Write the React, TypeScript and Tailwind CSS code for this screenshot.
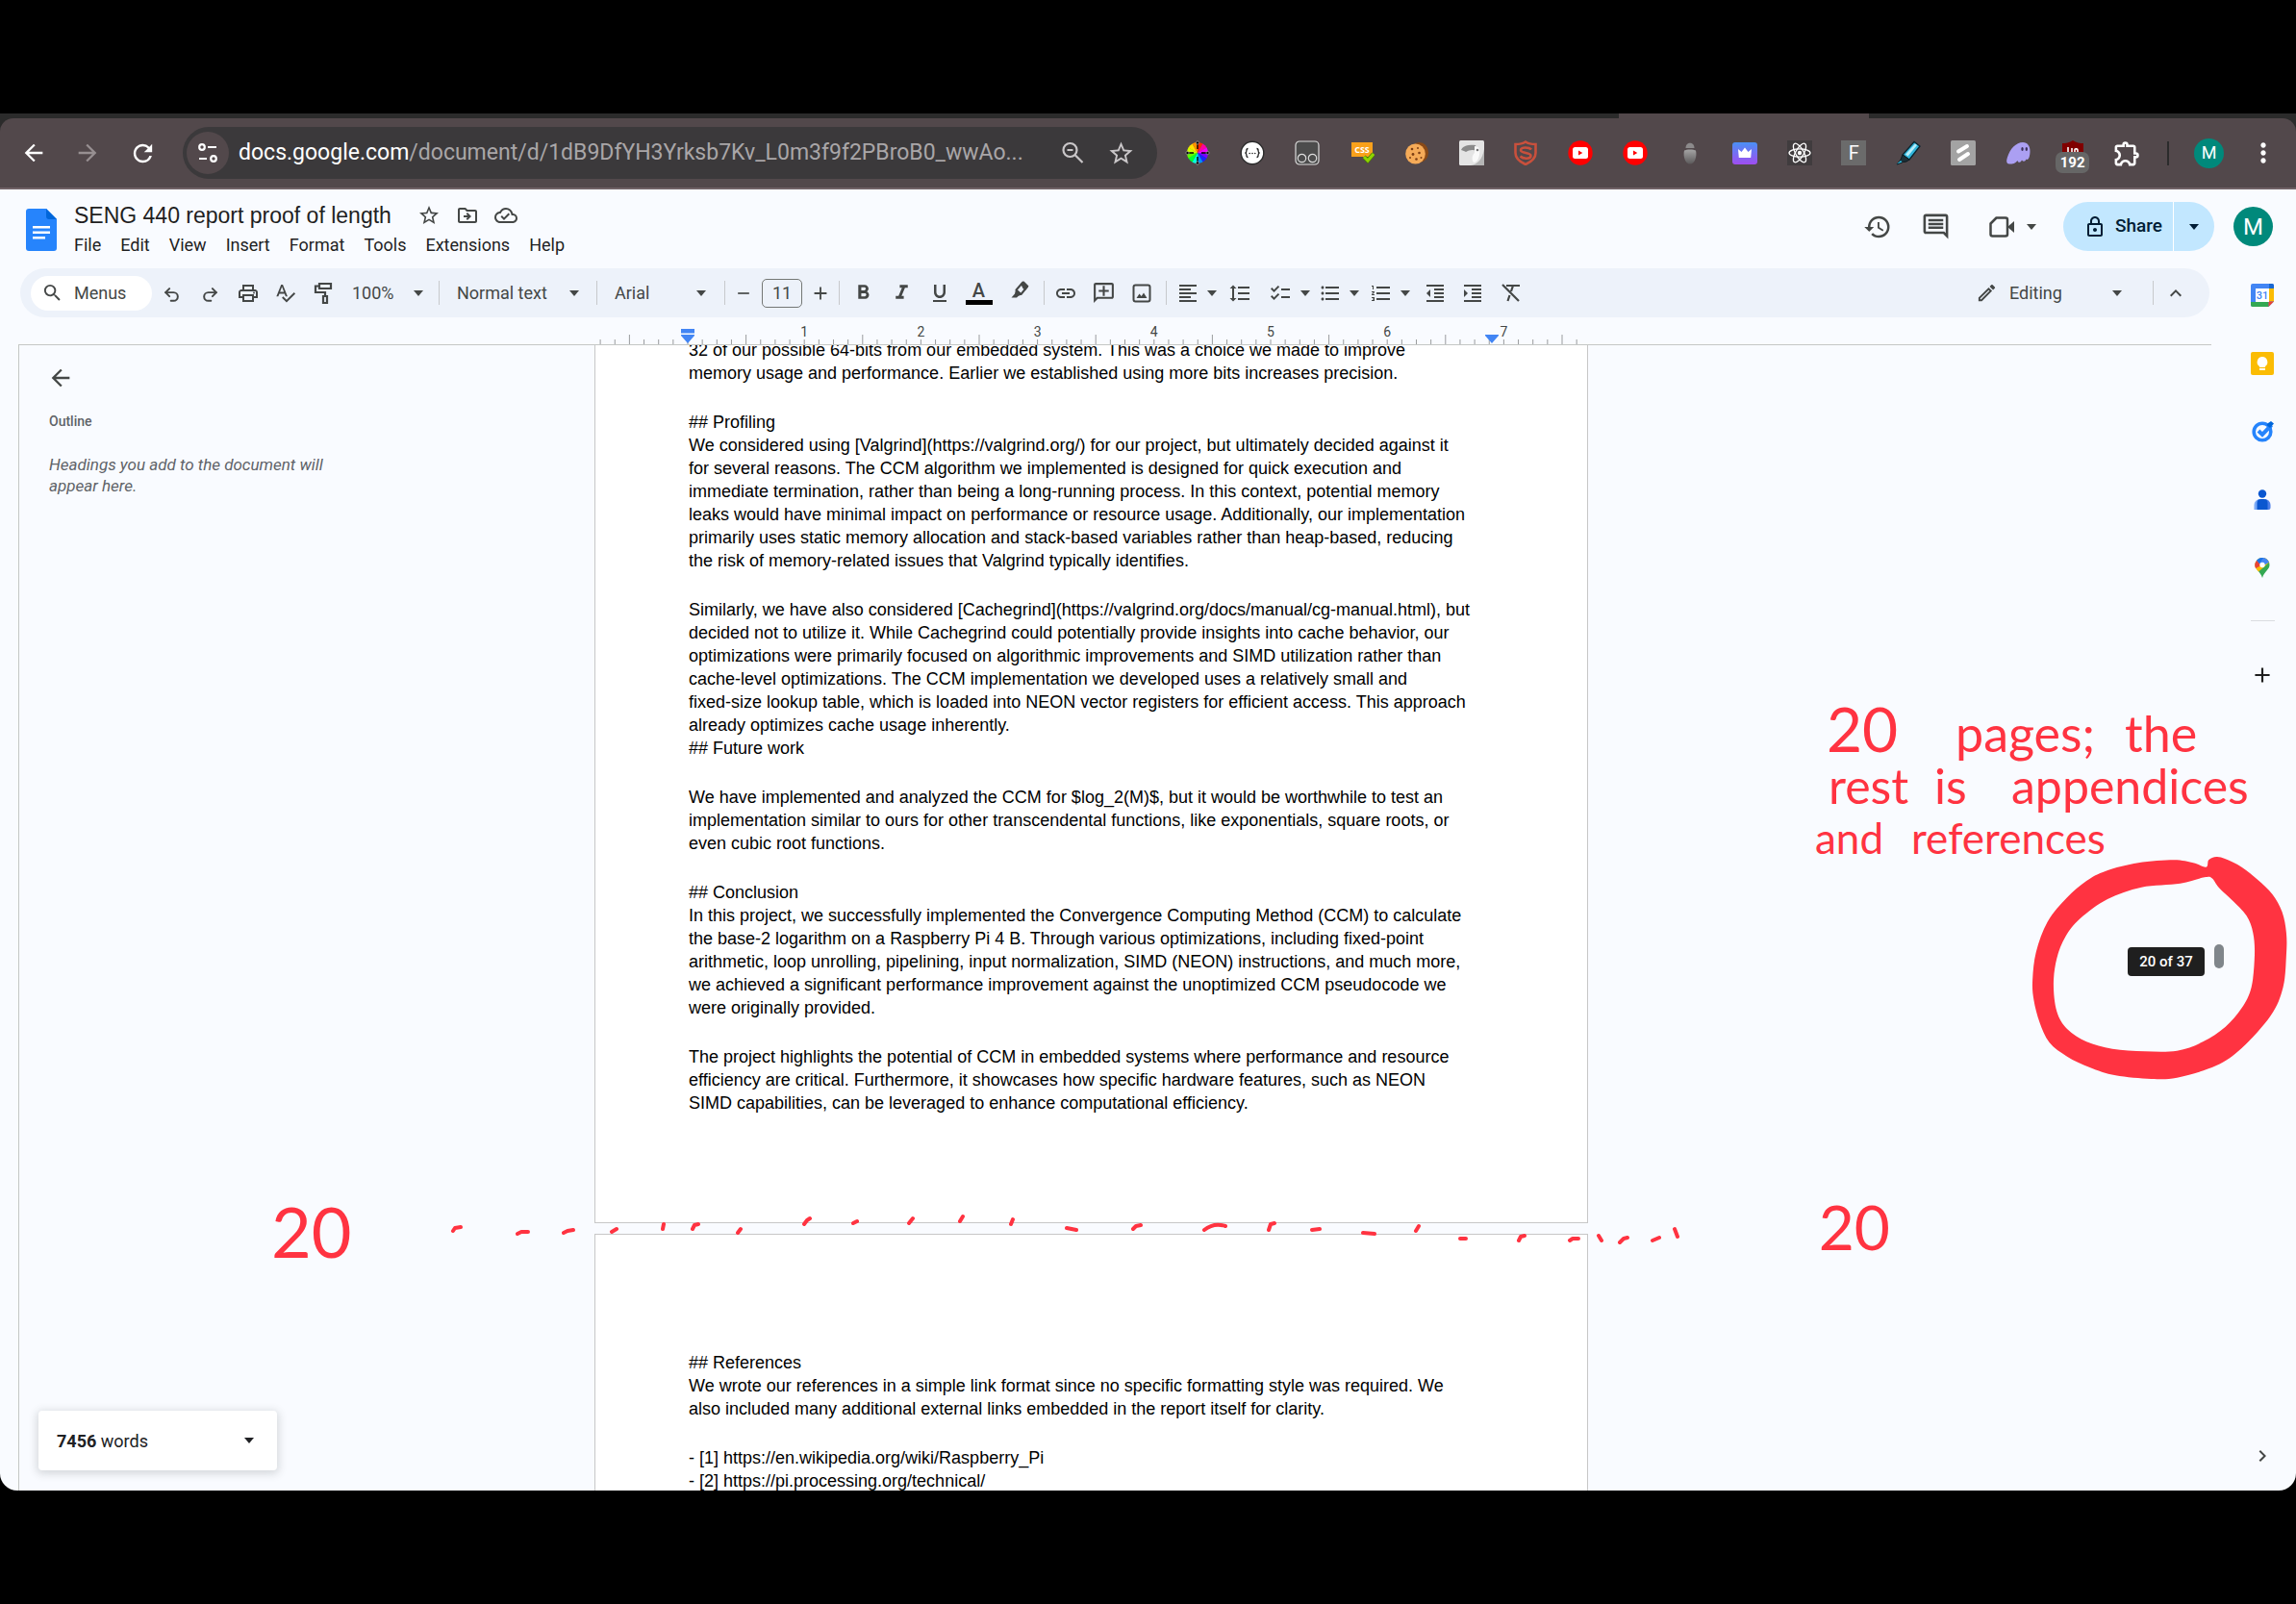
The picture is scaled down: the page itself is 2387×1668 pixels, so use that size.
import React from 'react';
import { Undo2, Redo2 } from 'lucide-react';
import {
  MdAdd,
  MdArrowBack,
  MdArrowForward,
  MdChecklist,
  MdChevronRight,
  MdFormatAlignLeft,
  MdFormatBold,
  MdFormatIndentDecrease,
  MdFormatIndentIncrease,
  MdFormatItalic,
  MdFormatLineSpacing,
  MdFormatListBulleted,
  MdFormatListNumbered,
  MdFormatUnderlined,
  MdHistory,
  MdKeyboardArrowUp,
  MdLink,
  MdMoreVert,
  MdOutlineAddComment,
  MdOutlineCloudDone,
  MdOutlineComment,
  MdOutlineDriveFileMove,
  MdOutlineEdit,
  MdOutlineExtension,
  MdOutlineLock,
  MdOutlinePrint,
  MdRefresh,
  MdRemove,
  MdSearch,
  MdSpellcheck,
  MdStarBorder,
} from 'react-icons/md';

type Point = [number, number];

const RED = '#ff3341';

function Caret() {
  return (
    <svg width="10" height="6" viewBox="0 0 10 6" className="shrink-0" aria-hidden="true">
      <path d="M0 0h10L5 6z" fill="currentColor" />
    </svg>
  );
}

/* ---------- browser extensions ---------- */

function Ext({ children }: { children: React.ReactNode }) {
  return (
    <svg width="26" height="26" viewBox="0 0 26 26" aria-hidden="true">
      {children}
    </svg>
  );
}

function YouTubeRound() {
  return (
    <Ext>
      <circle cx="13" cy="13" r="12.7" fill="#ff0000" />
      <rect x="5" y="7" width="16" height="12" rx="2.5" fill="#fff" />
      <path d="M11 10.5v5l4.3-2.5z" fill="#ff0000" />
    </Ext>
  );
}

const wheel = ['#ff2a00', '#ff00a0', '#f000ff', '#7a00ff', '#1a20ff', '#0090ff', '#00ffe0', '#00ff30', '#60ff00', '#d0ff00', '#ffe000', '#ff9000'];

const extensions: { name: string; icon: React.ReactNode }[] = [
  {
    name: 'Color wheel',
    icon: (
      <Ext>
        {wheel.map((c, i) => {
          const a = ((i * 30 - 90) * Math.PI) / 180;
          const b = ((i * 30 - 59) * Math.PI) / 180;
          return (
            <path
              key={c}
              fill={c}
              d={`M13 13L${13 + 11 * Math.cos(a)} ${13 + 11 * Math.sin(a)}A11 11 0 0 1 ${13 + 11 * Math.cos(b)} ${13 + 11 * Math.sin(b)}z`}
            />
          );
        })}
        <path d="M13 1v8M13 17v8M1 13h8M17 13h8" stroke="#000" strokeWidth="1.4" />
        <g fill="#000" stroke="#bbb" strokeWidth=".6">
          <circle cx="13" cy="2.5" r="1.6" />
          <circle cx="13" cy="23.5" r="1.6" />
          <circle cx="2.5" cy="13" r="1.6" />
          <circle cx="23.5" cy="13" r="1.6" />
        </g>
      </Ext>
    ),
  },
  {
    name: 'JSON viewer',
    icon: (
      <Ext>
        <circle cx="13" cy="13" r="11.8" fill="#fff" stroke="#2b2b2b" strokeWidth="1.4" />
        <path
          d="M8.5 8.5c-1.6 0-1.6 1-1.6 2.2 0 1.3-.3 2.1-1.4 2.3 1.1.2 1.4 1 1.4 2.3 0 1.2 0 2.2 1.6 2.2M17.5 8.5c1.6 0 1.6 1 1.6 2.2 0 1.3.3 2.1 1.4 2.3-1.1.2-1.4 1-1.4 2.3 0 1.2 0 2.2-1.6 2.2"
          fill="none"
          stroke="#222"
          strokeWidth="1.3"
        />
        <g fill="#222">
          <circle cx="10.2" cy="13.5" r=".8" />
          <circle cx="13" cy="13.5" r=".8" />
          <circle cx="15.8" cy="13.5" r=".8" />
        </g>
      </Ext>
    ),
  },
  {
    name: 'Tampermonkey',
    icon: (
      <Ext>
        <rect x="1" y="1" width="24" height="24" rx="4" fill="#4c4c4c" stroke="#dcdcdc" strokeWidth="1.2" />
        <circle cx="7.5" cy="18.5" r="4.2" fill="none" stroke="#dcdcdc" strokeWidth="1.2" />
        <circle cx="18.5" cy="18.5" r="4.2" fill="none" stroke="#dcdcdc" strokeWidth="1.2" />
      </Ext>
    ),
  },
  {
    name: 'CSS check',
    icon: (
      <Ext>
        <path d="M2 2h22v15H2z" fill="#f9a11b" />
        <text x="13" y="13" textAnchor="middle" fontSize="9" fontWeight="700" fontFamily="Open Sans, sans-serif" fill="#fff">
          CSS
        </text>
        <path d="M15 17l4 4 6-7" fill="none" stroke="#4b7d00" strokeWidth="4.5" />
        <path d="M15 17l4 4 6-7" fill="none" stroke="#8fd400" strokeWidth="3" />
      </Ext>
    ),
  },
  {
    name: 'Cookie editor',
    icon: (
      <Ext>
        <ellipse cx="15.5" cy="12.5" rx="9.5" ry="10.5" fill="#8a4a16" />
        <ellipse cx="11.5" cy="14" rx="10.3" ry="10.5" fill="#f5ab58" />
        <g fill="#7d3f14">
          <circle cx="8" cy="9" r="1.3" />
          <circle cx="14" cy="8" r="1" />
          <circle cx="9" cy="14.5" r="1.4" />
          <circle cx="15.5" cy="13" r="1.3" />
          <circle cx="6" cy="18" r="1" />
          <circle cx="12.5" cy="19.5" r="1.3" />
          <circle cx="17.5" cy="18" r="1" />
        </g>
      </Ext>
    ),
  },
  {
    name: 'Toucan',
    icon: (
      <Ext>
        <rect width="26" height="26" rx="1.5" fill="#e4e4e4" />
        <path d="M26 9v17H12c7-1 12-6 14-17z" fill="#b5b5b5" />
        <path d="M2 10c2-5 9-6 15-5l2 6c-5-2-9-1-12 1-2-1-4-2-5-2z" fill="#8a8a8a" />
        <path d="M16 6c5 0 6 4 5 9-1 5-3 8-6 8-2-3-2-7 1-10z" fill="#fafafa" />
        <circle cx="19" cy="10" r="1.3" fill="#777" />
      </Ext>
    ),
  },
  {
    name: 'Shield S',
    icon: (
      <Ext>
        <g fill="none" stroke="#c9503c" strokeWidth="2.6">
          <path d="M13 1.5c3 2 7 2.5 10.5 2.5v9c0 6-5 9.5-10.5 12C7.5 22.5 2.5 19 2.5 13V4C6 4 10 3.5 13 1.5z" />
          <path d="M19 9.500c-2-2.500-11-3-11 .5 0 4 10.500 2 10.500 6 0 3.500-8 3.500-11 .5" />
        </g>
      </Ext>
    ),
  },
  { name: 'YouTube tweaks', icon: <YouTubeRound /> },
  { name: 'YouTube controls', icon: <YouTubeRound /> },
  {
    name: 'Acorn',
    icon: (
      <Ext>
        <defs>
          <linearGradient id="acorn" x1="0" y1="0" x2="0" y2="1">
            <stop offset="0" stopColor="#a5a5a5" />
            <stop offset="1" stopColor="#5c5a5b" />
          </linearGradient>
        </defs>
        <path d="M8.500 8c0-7 9-7 9 0z" fill="#8c8a8b" />
        <path d="M7 10.500c2-1.500 10-1.500 12 0 1.500 6-1 14-6 14S5.500 16.500 7 10.500z" fill="url(#acorn)" />
      </Ext>
    ),
  },
  {
    name: 'Crown',
    icon: (
      <Ext>
        <defs>
          <linearGradient id="crown" x1="0" y1="0" x2="0" y2="1">
            <stop offset="0" stopColor="#4a90f5" />
            <stop offset="1" stopColor="#a04df0" />
          </linearGradient>
        </defs>
        <rect y="2" width="26" height="23" rx="3" fill="url(#crown)" />
        <path d="M6 9l3.500 3L13 7.500l3.500 4.500L20 9l-.8 9H6.800z" fill="#fff" />
      </Ext>
    ),
  },
  {
    name: 'React tools',
    icon: (
      <Ext>
        <rect width="26" height="26" fill="#403c3e" />
        <g fill="none" stroke="#fff" strokeWidth="1.3">
          <ellipse cx="13" cy="13" rx="11" ry="4.2" />
          <ellipse cx="13" cy="13" rx="11" ry="4.2" transform="rotate(60 13 13)" />
          <ellipse cx="13" cy="13" rx="11" ry="4.2" transform="rotate(120 13 13)" />
        </g>
        <circle cx="13" cy="13" r="2.2" fill="#fff" />
      </Ext>
    ),
  },
  {
    name: 'F',
    icon: <span className="flex size-[26px] items-center justify-center bg-[#6b6b6b] font-[Roboto] text-[20px] leading-none text-white">F</span>,
  },
  {
    name: 'Highlighter',
    icon: (
      <Ext>
        <path d="M7 15L19 1.500l6 4.500-11 14z" fill="#2fb4da" stroke="#0b2530" strokeWidth="1.3" />
        <path d="M10 14.500L20 3.500l2 1.500-9.500 11.500z" fill="#b5ecf9" />
        <path d="M7 15l7 5-3 2-3.500.5L1 25l4-5z" fill="#1d3038" stroke="#0b1a20" />
        <path d="M1 24.500l4-3.500 1.500 1.500z" fill="#2fc4ea" />
      </Ext>
    ),
  },
  {
    name: 'Stripes',
    icon: (
      <Ext>
        <rect width="26" height="26" rx="1.5" fill="#a3a3a3" />
        <path d="M8 11.500l9-5.500M9 20l9-6" stroke="#fff" strokeWidth="4" strokeLinecap="round" />
      </Ext>
    ),
  },
  {
    name: 'Phantom',
    icon: (
      <Ext>
        <path
          d="M25.500 11c0 7-2 10-4 8.500-1 2.500-3 3-4.500 1-1.500 3-4 3-4.500.5-2 3-5 3.500-8.500 3.500-3 0-3.500-3-2-7C4.500 9 11 2 18 2c5 0 7.500 4 7.500 9z"
          fill="#ab9ff2"
        />
        <ellipse cx="17.5" cy="9" rx="1.2" ry="1.9" fill="#3c315b" />
        <ellipse cx="21.8" cy="9" rx="1.2" ry="1.9" fill="#3c315b" />
      </Ext>
    ),
  },
  {
    name: 'uBlock',
    icon: (
      <span className="relative flex size-[26px] justify-center">
        <Ext>
          <path d="M13 0c3.500 2.500 7.500 3 11 3v12H2V3c3.500 0 7.500-.5 11-3z" fill="#800000" />
          <path d="M8 7v5M12 13V8M15 13V9.500c0-1 3-1 3 .5v3" stroke="#fff" strokeWidth="1.6" fill="none" />
        </Ext>
        <span className="absolute top-3 flex h-[22px] w-[35px] items-center justify-center rounded-[7px] bg-[#666666] font-[Roboto] text-[15px] font-bold leading-none text-white">
          192
        </span>
      </span>
    ),
  },
  { name: 'Extensions', icon: <MdOutlineExtension className="size-[31px] text-white" /> },
];

function BrowserBar() {
  return (
    <div className="bg-[#2b2b2b]">
      <div className="flex h-[5px]">
        <div className="flex-1" />
        <div className="w-[260px] bg-[#52484b]" />
        <div className="w-[444px]" />
      </div>
      <div className="flex h-[74px] items-center rounded-t-[14px] border-b-2 border-[#706266] bg-[#52484b] pl-[7px]">
        <button aria-label="Back" className="flex w-14 justify-center text-white">
          <MdArrowBack className="size-7" />
        </button>
        <button aria-label="Forward" className="flex w-14 justify-center text-[#978f91]">
          <MdArrowForward className="size-7" />
        </button>
        <button aria-label="Reload" className="flex w-[58px] justify-center text-white">
          <MdRefresh className="size-[29px]" />
        </button>
        <div className="ml-[13px] flex h-[54px] min-w-0 flex-1 items-center rounded-full bg-[#3b393b] pl-1 pr-[13px] font-[Roboto]">
          <button aria-label="Site information" className="flex size-11 shrink-0 items-center justify-center rounded-full bg-[#52484b]">
            <svg width="22" height="22" viewBox="0 0 22 22" fill="none" stroke="#fff" strokeWidth="2.2" aria-hidden="true">
              <circle cx="5" cy="5" r="2.8" />
              <path d="M11 5h9M2 17h8" />
              <circle cx="17" cy="17" r="2.8" />
            </svg>
          </button>
          <div className="ml-[10px] min-w-0 flex-1 truncate text-[23px] leading-8 text-[#a9a6a8]">
            <span className="text-white">docs.google.com</span>/document/d/1dB9DfYH3Yrksb7Kv_L0m3f9f2PBroB0_wwAo...
          </div>
          <button aria-label="Zoom" className="flex w-[50px] justify-center">
            <svg width="24" height="24" viewBox="0 0 24 24" fill="none" stroke="#c9c6c8" strokeWidth="2.2" aria-hidden="true">
              <circle cx="9.5" cy="9" r="7" />
              <path d="M14.500 14l8 8M6.500 9h6" />
            </svg>
          </button>
          <button aria-label="Bookmark" className="flex w-[50px] justify-center text-[#c9c6c8]">
            <MdStarBorder className="size-[29px]" />
          </button>
        </div>
        <div className="ml-[14px] flex w-[1023px]">
          {extensions.map((e) => (
            <button key={e.name} aria-label={e.name} className="flex flex-1 items-center justify-center">
              {e.icon}
            </button>
          ))}
        </div>
        <div className="ml-[13px] h-[25px] w-[2px] bg-[#2b2b2b]" />
        <button aria-label="Profile" className="ml-[26px] flex size-[31px] items-center justify-center rounded-full bg-[#00897b] font-[Roboto] text-[18px] leading-none text-white">
          M
        </button>
        <button aria-label="Browser menu" className="ml-[25px] mr-[18px] flex w-8 justify-center text-white">
          <MdMoreVert className="size-8" />
        </button>
      </div>
    </div>
  );
}

/* ---------- document header ---------- */

const menus = ['File', 'Edit', 'View', 'Insert', 'Format', 'Tools', 'Extensions', 'Help'];

function DocHeader() {
  return (
    <header className="flex h-[82px] items-start pl-[27px] pr-6 pt-[13px]">
      <a href="#home" aria-label="Docs home" className="mt-[7px]">
        <svg width="32" height="44" viewBox="0 0 32 44" aria-hidden="true">
          <path d="M3 0h18l11 11v30a3 3 0 0 1-3 3H3a3 3 0 0 1-3-3V3a3 3 0 0 1 3-3z" fill="#2684fc" />
          <path d="M21 0l11 11H24a3 3 0 0 1-3-3z" fill="#0066da" />
          <path d="M7 18h18v2.600H7zM7 23.500h18v2.600H7zM7 29h13v2.600H7z" fill="#fff" />
        </svg>
      </a>
      <div className="ml-[18px]">
        <div className="flex h-7 items-center text-[#444746]">
          <input
            aria-label="Document title"
            defaultValue="SENG 440 report proof of length"
            className="w-[349px] bg-transparent font-[Liberation_Sans] text-[23px] leading-7 text-[#1f1f1f]"
          />
          <button aria-label="Star" className="flex w-10 justify-center">
            <MdStarBorder className="size-6" />
          </button>
          <button aria-label="Move" className="flex w-10 justify-center">
            <MdOutlineDriveFileMove className="size-6" />
          </button>
          <button aria-label="Saved to Drive" className="flex w-10 justify-center">
            <MdOutlineCloudDone className="size-6" />
          </button>
        </div>
        <nav className="mt-[3px] flex gap-5 font-[Roboto] text-[18px] leading-7 text-[#1f1f1f]">
          {menus.map((m) => (
            <button key={m}>{m}</button>
          ))}
        </nav>
      </div>
      <div className="ml-auto flex h-[51px] items-center text-[#444746]">
        <button aria-label="Version history" className="flex w-[61px] justify-center">
          <MdHistory className="size-[30px]" />
        </button>
        <button aria-label="Comments" className="flex w-[60px] justify-center">
          <MdOutlineComment className="size-[31px]" />
        </button>
        <button aria-label="Join a call" className="flex w-[103px] items-center gap-3 pl-[25px]">
          <svg width="28" height="26" viewBox="0 0 28 26" aria-hidden="true">
            <path d="M8.500 3.500h9.500a2 2 0 0 1 2 2v15a2 2 0 0 1-2 2H4.500a2 2 0 0 1-2-2V9.500z" fill="none" stroke="currentColor" strokeWidth="2.5" strokeLinejoin="round" />
            <path d="M20 13l7-6v12z" fill="currentColor" />
          </svg>
          <Caret />
        </button>
        <div className="flex h-full w-[157px] overflow-hidden rounded-full bg-[#c2e7ff] font-[Roboto] text-[19px] font-medium text-[#001d35]">
          <button className="flex flex-1 items-center gap-[9px] pl-[21px]">
            <MdOutlineLock className="size-6" />
            Share
          </button>
          <button aria-label="Share options" className="flex w-[43px] items-center border-l border-white pl-4">
            <Caret />
          </button>
        </div>
        <button aria-label="Account" className="ml-5 flex size-[41px] items-center justify-center rounded-full bg-[#00897b] font-[Roboto] text-[24px] leading-none text-white">
          M
        </button>
      </div>
    </header>
  );
}

/* ---------- formatting toolbar ---------- */

function Sep() {
  return <div className="h-[25px] w-px shrink-0 bg-[#c7c9cc]" />;
}

function Tool({ label, width = 'w-10', children }: { label: string; width?: string; children: React.ReactNode }) {
  return (
    <button aria-label={label} className={`flex h-9 shrink-0 items-center justify-center ${width}`}>
      {children}
    </button>
  );
}

function Toolbar() {
  return (
    <div className="ml-[21px] mr-5 flex h-[51px] shrink-0 items-center rounded-full bg-[#edf2fa] pl-[11px] font-[Roboto] text-[18px] text-[#444746]">
      <button className="flex h-9 w-[126px] items-center gap-[11px] rounded-full bg-white pl-[11px]">
        <MdSearch className="size-[23px]" />
        Menus
      </button>
      <Tool label="Undo"><Undo2 className="mt-1 size-[19px]" strokeWidth={2.5} /></Tool>
      <Tool label="Redo"><Redo2 className="mt-1 size-[19px]" strokeWidth={2.5} /></Tool>
      <Tool label="Print" width="w-[39px]"><MdOutlinePrint className="size-6" /></Tool>
      <Tool label="Spelling" width="w-[39px]"><MdSpellcheck className="size-[23px]" /></Tool>
      <Tool label="Paint format" width="w-[39px]">
        <svg width="20" height="24" viewBox="0 0 20 24" fill="none" stroke="currentColor" strokeWidth="2.2" aria-hidden="true">
          <path d="M6 2h12v5H6zM6 4.500H2v6.500h10v4" />
          <path d="M10 15h4v7h-4z" />
        </svg>
      </Tool>
      <button className="flex w-[101px] items-center justify-between pl-[11px] pr-4">100%<Caret /></button>
      <Sep />
      <button className="flex w-[163px] items-center justify-between pl-[18px] pr-[18px]">Normal text<Caret /></button>
      <Sep />
      <button className="flex w-[132px] items-center justify-between pl-[18px] pr-[19px]">Arial<Caret /></button>
      <Sep />
      <Tool label="Decrease font size" width="w-[38px]"><MdRemove className="size-5" /></Tool>
      <input aria-label="Font size" defaultValue="11" className="h-[30px] w-[42px] rounded-[5px] border border-[#747775] bg-transparent text-center text-[18px] leading-none" />
      <Tool label="Increase font size" width="w-[38px]"><MdAdd className="size-[22px]" /></Tool>
      <Sep />
      <Tool label="Bold" width="w-[48px]"><MdFormatBold className="size-[25px]" /></Tool>
      <Tool label="Italic" width="w-[33px]"><MdFormatItalic className="size-[25px]" /></Tool>
      <Tool label="Underline" width="w-[46px]"><MdFormatUnderlined className="size-6" /></Tool>
      <Tool label="Text color" width="w-[35px]">
        <span className="flex flex-col items-center">
          <span className="text-[20px] font-medium leading-5">A</span>
          <span className="h-[5px] w-[28px] bg-black" />
        </span>
      </Tool>
      <Tool label="Highlight color" width="w-[50px]">
        <svg width="20" height="20" viewBox="0 0 20 20" className="mb-[6px]" aria-hidden="true">
          <path d="M13.500 1.500l4.500 4.500-6.500 8-5-4.500z" fill="none" stroke="currentColor" strokeWidth="2" strokeLinejoin="round" />
          <path d="M11 3l3.500-2.500 5 5L16 10l-2.500-2zM6 9l6 5.500-3.500 1.500-1.500 1.500H1.500l3.500-4z" fill="currentColor" />
        </svg>
      </Tool>
      <Sep />
      <Tool label="Insert link" width="w-[43px]"><MdLink className="size-6" /></Tool>
      <Tool label="Add comment" width="w-9"><MdOutlineAddComment className="size-[25px] -scale-x-100" /></Tool>
      <Tool label="Insert image" width="w-[43px]">
        <svg width="20" height="20" viewBox="0 0 20 20" aria-hidden="true">
          <rect x="1.5" y="1.5" width="17" height="17" rx="2" fill="none" stroke="currentColor" strokeWidth="2" />
          <path d="M4.500 15l3-4.500 2.200 2.500 2.300-3.500 3.500 5.500z" fill="currentColor" />
        </svg>
      </Tool>
      <div className="w-1" />
      <Sep />
      <Tool label="Align" width="w-[62px]"><MdFormatAlignLeft className="mr-2 size-6 shrink-0" /><Caret /></Tool>
      <Tool label="Line spacing" width="w-[28px]"><MdFormatLineSpacing className="size-6" /></Tool>
      <Tool label="Checklist" width="w-[70px]"><MdChecklist className="ml-1 mr-[9px] size-6" /><Caret /></Tool>
      <Tool label="Bulleted list" width="w-[38px]"><MdFormatListBulleted className="mr-2 size-6 shrink-0" /><Caret /></Tool>
      <Tool label="Numbered list" width="w-[68px]"><MdFormatListNumbered className="mr-2 size-6 shrink-0" /><Caret /></Tool>
      <Tool label="Decrease indent" width="w-[26px]"><MdFormatIndentDecrease className="size-6" /></Tool>
      <Tool label="Increase indent" width="w-[52px]"><MdFormatIndentIncrease className="size-6" /></Tool>
      <Tool label="Clear formatting" width="w-[28px]">
        <svg width="22" height="22" viewBox="0 0 22 22" fill="none" stroke="currentColor" strokeWidth="2.2" aria-hidden="true">
          <path d="M6 3h14M13 3l-2 6M9.500 13L7.500 19M2 2l17 17" />
        </svg>
      </Tool>
      <button className="ml-auto flex w-[187px] items-center pl-[3px]">
        <MdOutlineEdit className="size-[23px]" />
        <span className="ml-3">Editing</span>
        <span className="ml-auto mr-8"><Caret /></span>
      </button>
      <Sep />
      <Tool label="Hide the menus" width="w-[46px]"><MdKeyboardArrowUp className="size-6" /></Tool>
      <div className="w-3" />
    </div>
  );
}

/* ---------- ruler ---------- */

function Ruler() {
  const ticks = Array.from({ length: 68 }, (_, i) => i - 6);
  const at = (i: number) => 97 + (i * 121.2) / 8;
  return (
    <svg width="1034" height="28" viewBox="0 0 1034 28" className="block" aria-hidden="true">
      {ticks.map((i) => (
        <path key={i} d={`M${at(i)} ${(i + 8) % 8 === 4 ? 18 : 23}V28`} stroke="#9a9c9e" strokeWidth="1" />
      ))}
      {[1, 2, 3, 4, 5, 6, 7].map((n) => (
        <text key={n} x={at(n * 8)} y="20" textAnchor="middle" fontFamily="Roboto, sans-serif" fontSize="14" fill="#444746">
          {n}
        </text>
      ))}
      <path d="M90 12h14v4.500H90zM90 18h14v1l-7 8-7-8z" fill="#4285f4" />
      <path d="M926 18h14v1l-7 8-7-8z" fill="#4285f4" />
    </svg>
  );
}

/* ---------- document ---------- */

const pageOne: string[][] = [
  [
    '32 of our possible 64-bits from our embedded system. This was a choice we made to improve',
    'memory usage and performance. Earlier we established using more bits increases precision.',
  ],
  [
    '## Profiling',
    'We considered using [Valgrind](https://valgrind.org/) for our project, but ultimately decided against it',
    'for several reasons. The CCM algorithm we implemented is designed for quick execution and',
    'immediate termination, rather than being a long-running process. In this context, potential memory',
    'leaks would have minimal impact on performance or resource usage. Additionally, our implementation',
    'primarily uses static memory allocation and stack-based variables rather than heap-based, reducing',
    'the risk of memory-related issues that Valgrind typically identifies.',
  ],
  [
    'Similarly, we have also considered [Cachegrind](https://valgrind.org/docs/manual/cg-manual.html), but',
    'decided not to utilize it. While Cachegrind could potentially provide insights into cache behavior, our',
    'optimizations were primarily focused on algorithmic improvements and SIMD utilization rather than',
    'cache-level optimizations. The CCM implementation we developed uses a relatively small and',
    'fixed-size lookup table, which is loaded into NEON vector registers for efficient access. This approach',
    'already optimizes cache usage inherently.',
    '## Future work',
  ],
  [
    'We have implemented and analyzed the CCM for $log_2(M)$, but it would be worthwhile to test an',
    'implementation similar to ours for other transcendental functions, like exponentials, square roots, or',
    'even cubic root functions.',
  ],
  [
    '## Conclusion',
    'In this project, we successfully implemented the Convergence Computing Method (CCM) to calculate',
    'the base-2 logarithm on a Raspberry Pi 4 B. Through various optimizations, including fixed-point',
    'arithmetic, loop unrolling, pipelining, input normalization, SIMD (NEON) instructions, and much more,',
    'we achieved a significant performance improvement against the unoptimized CCM pseudocode we',
    'were originally provided.',
  ],
  [
    'The project highlights the potential of CCM in embedded systems where performance and resource',
    'efficiency are critical. Furthermore, it showcases how specific hardware features, such as NEON',
    'SIMD capabilities, can be leveraged to enhance computational efficiency.',
  ],
];

const pageTwo: string[][] = [
  [
    '## References',
    'We wrote our references in a simple link format since no specific formatting style was required. We',
    'also included many additional external links embedded in the report itself for clarity.',
  ],
  ['- [1] https://en.wikipedia.org/wiki/Raspberry_Pi', '- [2] https://pi.processing.org/technical/'],
];

function Paragraphs({ blocks }: { blocks: string[][] }) {
  return (
    <div className="flex flex-col gap-[27px]">
      {blocks.map((lines) => (
        <p key={lines[0]}>
          {lines.map((l) => (
            <span key={l} className="block">{l}</span>
          ))}
        </p>
      ))}
    </div>
  );
}

function DocumentArea() {
  return (
    <div className="ml-[19px] flex min-h-0 flex-1">
      <div className="relative flex min-w-0 flex-1 overflow-hidden border-l border-t border-[#c4c7c5]">
        <aside className="w-[598px] shrink-0 pl-[31px] font-[Roboto] text-[#5f6368]">
          <button aria-label="Close outline" className="mt-5 block text-[#444746]">
            <MdArrowBack className="-ml-0.5 size-7" />
          </button>
          <h2 className="mt-[21px] text-[14px] font-medium leading-5">Outline</h2>
          <p className="mt-6 w-[300px] text-[17px] italic leading-[22px]">Headings you add to the document will appear here.</p>
        </aside>
        <main className="w-[1033px] shrink-0 whitespace-nowrap font-[Liberation_Sans] text-[18px] leading-6 text-black">
          <section className="border-x border-b border-[#c7c7c7] bg-white px-[97px] pb-28">
            <div className="-mt-[7px]">
              <Paragraphs blocks={pageOne} />
            </div>
          </section>
          <section className="mt-[11px] h-[1333px] border border-[#c7c7c7] bg-white px-[97px] pt-[121px]">
            <Paragraphs blocks={pageTwo} />
          </section>
        </main>
        <button className="absolute bottom-[21px] left-5 flex h-[62px] w-[248px] items-center justify-between rounded bg-white pl-[19px] pr-6 font-[Roboto] text-[18px] text-[#202124] shadow-[0_2px_8px_2px_rgba(60,64,67,0.18)]">
          <span><b>7456</b> words</span>
          <Caret />
        </button>
        <div className="absolute right-[7px] top-[626px] flex h-[30px] w-[80px] items-center justify-center rounded bg-[#1f1f1f] font-[Roboto] text-[15px] font-medium leading-none text-white">
          20 of 37
        </div>
      </div>
      <div className="w-[18px] shrink-0 pl-[3px] pt-[624px]">
        <div className="h-[25px] w-[10px] rounded-full bg-[#80868b]" />
      </div>
    </div>
  );
}

/* ---------- side rail ---------- */

function SideRail() {
  return (
    <aside className="flex w-[70px] shrink-0 flex-col items-center pb-6 pt-4">
      <div className="flex flex-col items-center gap-[47px]">
        <button aria-label="Calendar" className="block">
          <svg width="24" height="24" viewBox="0 0 24 24" className="block" aria-hidden="true">
            <path d="M2 0h20a2 2 0 0 1 2 2v16.500L18.500 24H2a2 2 0 0 1-2-2V2a2 2 0 0 1 2-2z" fill="#4285f4" />
            <path d="M0 19h18.500v5H2a2 2 0 0 1-2-2z" fill="#34a853" />
            <path d="M19 5h5v13.500h-5z" fill="#fbbc04" />
            <path d="M19 0h3a2 2 0 0 1 2 2v3h-5z" fill="#1967d2" />
            <path d="M18.500 18.500H24L18.500 24z" fill="#ea4335" />
            <path d="M5 5h14v14H5z" fill="#fff" />
            <text x="12" y="16" textAnchor="middle" fontFamily="Roboto, sans-serif" fontWeight="500" fontSize="11" fill="#4285f4">31</text>
          </svg>
        </button>
        <button aria-label="Keep" className="block">
          <svg width="24" height="24" viewBox="0 0 24 24" className="block" aria-hidden="true">
            <rect width="24" height="24" rx="2" fill="#fbbc04" />
            <path d="M12 5a5.500 5.500 0 0 1 3 10v1H9v-1a5.500 5.500 0 0 1 3-10zM9 17h6v2H9z" fill="#fff" />
          </svg>
        </button>
        <button aria-label="Tasks" className="block">
          <svg width="24" height="24" viewBox="0 0 24 24" className="block" aria-hidden="true">
            <circle cx="12" cy="12" r="8.8" fill="none" stroke="#2684fc" strokeWidth="3.6" />
            <path d="M8 11l4 4 9.500-10" fill="none" stroke="#2684fc" strokeWidth="4" />
            <path d="M18 3l3-2 3 2.500-4 4.500-3.500-3z" fill="#0066da" />
          </svg>
        </button>
        <button aria-label="Contacts" className="block">
          <svg width="24" height="24" viewBox="0 0 24 24" className="block" aria-hidden="true">
            <circle cx="12" cy="5.5" r="4.2" fill="#0b57d0" />
            <path d="M3.500 17a6 6 0 0 1 6-6v11h-6z" fill="#7baaf7" />
            <path d="M14.500 11a6 6 0 0 1 6 6v3a2 2 0 0 1-2 2h-4z" fill="#4c7ee8" />
            <path d="M6.500 15a4 4 0 0 1 4-4h3a4 4 0 0 1 4 4v7h-11z" fill="#0b57d0" />
          </svg>
        </button>
        <button aria-label="Maps" className="block">
          <svg width="24" height="24" viewBox="0 0 24 24" className="block" aria-hidden="true">
            <path d="M12 1a7.500 7.500 0 0 0-7.500 7.500c0 5 5.500 6.500 7.500 13.500 2-7 7.500-8.500 7.500-13.500A7.500 7.500 0 0 0 12 1z" fill="#34a853" />
            <path d="M12 1a7.500 7.500 0 0 1 7 5L8 15.500c-2-2.300-3.500-4-3.500-7A7.500 7.500 0 0 1 12 1z" fill="#fbbc04" />
            <path d="M6.200 3.700L12 8.500 5 12a8 8 0 0 1 1.200-8.300z" fill="#ea4335" />
            <path d="M6.200 3.700a7.500 7.500 0 0 1 12.800 2L12 10z" fill="#4285f4" />
            <path d="M6.200 3.700A7.500 7.500 0 0 1 13 1.100L9 7z" fill="#1a73e8" />
            <circle cx="12" cy="8.5" r="2.7" fill="#fff" />
          </svg>
        </button>
      </div>
      <div className="mt-[42px] h-px w-[25px] bg-[#dadce0]" />
      <button aria-label="Get add-ons" className="mt-[43px] text-[#1f1f1f]">
        <MdAdd className="size-[26px]" />
      </button>
      <button aria-label="Hide side panel" className="mt-auto text-[#444746]">
        <MdChevronRight className="size-6" />
      </button>
    </aside>
  );
}

/* ---------- red pen marks ---------- */

function smooth(pts: Point[]) {
  const n = pts.length;
  let d = `M${pts[0][0]} ${pts[0][1]}`;
  for (let i = 0; i < n; i++) {
    const a = pts[(i - 1 + n) % n];
    const b = pts[i];
    const c = pts[(i + 1) % n];
    const e = pts[(i + 2) % n];
    d += `C${b[0] + (c[0] - a[0]) / 6} ${b[1] + (c[1] - a[1]) / 6} ${c[0] - (e[0] - b[0]) / 6} ${c[1] - (e[1] - b[1]) / 6} ${c[0]} ${c[1]}`;
  }
  return d + 'z';
}

const ringOuter: Point[] = [
  [1290, 605], [1298, 583], [1322, 573], [1350, 580], [1400, 605], [1450, 645], [1495, 690], [1525, 745], [1538, 810], [1538, 880],
  [1528, 980], [1490, 1068], [1400, 1170], [1320, 1225], [1200, 1262], [1120, 1266], [1010, 1255], [930, 1230], [860, 1196],
  [805, 1152], [775, 1090], [757, 1020], [753, 960], [764, 870], [800, 775], [860, 700], [920, 648], [980, 617], [1080, 592],
  [1190, 583], [1250, 592],
];
const ringInner: Point[] = [
  [1308, 640], [1285, 637], [1210, 656], [1090, 668], [985, 705], [900, 766], [855, 822], [828, 890], [818, 970], [828, 1055],
  [860, 1110], [920, 1150], [1000, 1172], [1100, 1180], [1200, 1178], [1280, 1150], [1350, 1103], [1400, 1045], [1430, 980],
  [1440, 880], [1435, 810], [1415, 757], [1370, 708], [1330, 670],
];

const dashes = [
  'M471 50l2-3 6-1', 'M538 53l4-2h7', 'M586 52l4-2 6-1', 'M636 51l5-3', 'M689 48l1-5', 'M720 48l2-4 4-1', 'M767 52l3-4', 'M836 43l3-4 3-2',
  'M887 42l4-2', 'M945 42l4-5', 'M998 40l3-5', 'M1051 43l2-5', 'M1109 47l10 2', 'M1178 48l3-3 5-1', 'M1252 49q10-8 22-4', 'M1319 49l2-6 4-1',
  'M1364 49l8-1', 'M1417 52l12 1', 'M1472 50l3-5', 'M1518 58h6', 'M1579 60l2-4 4-1', 'M1632 60l3-2h6', 'M1662 55l3 5', 'M1684 62l4-4 4-1',
  'M1718 60l7-3', 'M1741 48l3 8',
];

function PenMarks() {
  return (
    <div className="pointer-events-none absolute inset-0 font-[Lato] text-[#ff3341]">
      <svg className="absolute right-0 top-[582px]" width="527" height="450" viewBox="0 0 1568 1350" preserveAspectRatio="none" aria-hidden="true">
        <path d={smooth(ringOuter) + smooth(ringInner)} fillRule="evenodd" fill={RED} />
      </svg>
      <svg className="absolute left-0 top-[1112px]" width="1760" height="110" viewBox="0 0 1760 110" aria-hidden="true">
        <path d={dashes.join('')} fill="none" stroke={RED} strokeWidth="4" strokeLinecap="round" strokeLinejoin="round" />
      </svg>
      <div className="absolute left-[282px] top-[1122px] text-[72px] leading-[80px]">20</div>
      <div className="absolute right-[422px] top-[1118px] text-[64px] leading-[80px]">20</div>
      <div className="absolute right-[42px] top-[608px] flex w-[458px] flex-col">
        <div className="flex h-[63px] items-baseline pl-[12px] leading-[63px]">
          <span className="w-[134px] text-[64px]">20</span>
          <span className="w-[176px] text-[52px]">pages;</span>
          <span className="text-[52px]">the</span>
        </div>
        <div className="flex h-[56px] items-baseline pl-[14px] text-[50px] leading-[56px]">
          <span className="w-[110px]">rest</span>
          <span className="w-[80px]">is</span>
          <span>appendices</span>
        </div>
        <div className="flex h-[52px] items-baseline text-[44px] leading-[52px]">
          <span className="w-[100px]">and</span>
          <span>references</span>
        </div>
      </div>
    </div>
  );
}

export default function App() {
  return (
    <div className="flex h-screen flex-col bg-black py-[118px]">
      <div className="relative flex min-h-0 flex-1 flex-col overflow-hidden rounded-b-[18px] bg-[#f9fbff]">
        <BrowserBar />
        <DocHeader />
        <div className="flex min-h-0 flex-1">
          <div className="flex min-w-0 flex-1 flex-col">
            <Toolbar />
            <div className="h-7 shrink-0 pl-[618px]">
              <Ruler />
            </div>
            <DocumentArea />
          </div>
          <SideRail />
        </div>
        <PenMarks />
      </div>
    </div>
  );
}
